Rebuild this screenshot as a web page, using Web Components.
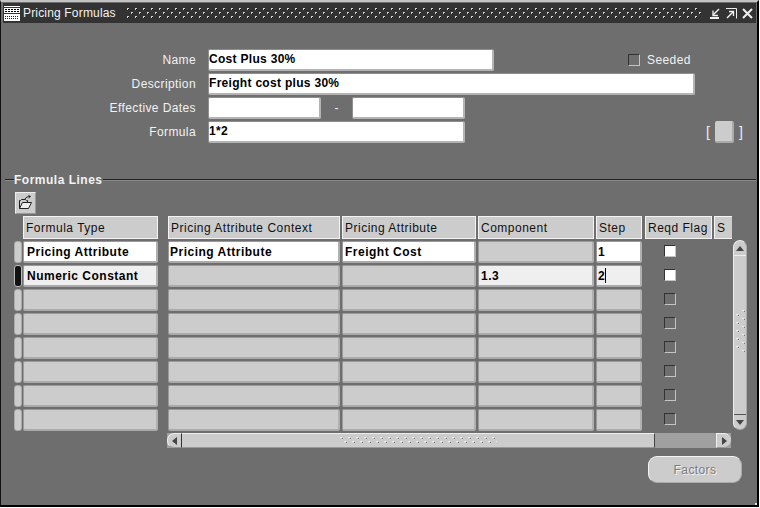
<!DOCTYPE html>
<html><head><meta charset="utf-8"><style>
html,body{margin:0;padding:0;background:#fff}
body{font:12px "Liberation Sans",Arial,sans-serif;width:760px;height:508px;overflow:hidden}
</style></head><body>
<x-window>
  <x-titlebar slot="title">Pricing Formulas</x-titlebar>
  <x-form>
    <x-row label="Name"><x-field w="286" value="Cost Plus 30%"></x-field><x-check label="Seeded"></x-check></x-row>
    <x-row label="Description"><x-field w="487" value="Freight cost plus 30%"></x-field></x-row>
    <x-row label="Effective Dates"><x-field w="113"></x-field><x-dash>-</x-dash><x-field w="113"></x-field></x-row>
    <x-row label="Formula"><x-field w="257" value="1*2"></x-field><x-descflex></x-descflex></x-row>
  </x-form>
  <x-section>Formula Lines</x-section>
  <x-toolbtn></x-toolbtn>
  <x-table></x-table>
  <x-footer><x-button>Factors</x-button></x-footer>
</x-window>
<script>
const def=(n,html)=>{customElements.define(n,class extends HTMLElement{
  constructor(){super();this.attachShadow({mode:'open'}).innerHTML=typeof html==='function'?html(this):html;}
})};

def('x-window',`<style>:host{display:flex;flex-direction:column;box-sizing:border-box;width:759px;height:507px;background:#6e6e6e;border-top:2px solid #c4c4c4;border-left:1px solid #111;border-right:2px solid #000;border-bottom:2px solid #000;color:#f2f2f2;position:relative}
:host::after{content:"";position:absolute;right:0;bottom:0;width:2px;height:2px;background:#ddd}</style><slot name="title"></slot><slot></slot>`);

def('x-titlebar',`<style>:host{display:flex;align-items:center;height:20px;background:#333;color:#f2f2f2;margin:1px 1px 0 2px;flex:none;letter-spacing:.17px}
.logo{width:16px;height:15px;margin:1px 3px 0 1px;flex:none;display:block}
.t{white-space:nowrap}.g{flex:1;margin:0 8px 0 9px;overflow:hidden;height:12px}
.g svg{display:block}
.b{display:flex;gap:5px;margin-right:3px}.b svg{display:block}</style>
<svg class="logo" viewBox="0 0 16 15"><rect width="16" height="15" fill="#fff"/><path d="M0 1.500h16" stroke="#333"/><path d="M1 3.500h14M1 5.500h14" stroke="#000" stroke-dasharray="2 1"/><path d="M0 7.500h16" stroke="#333"/><path d="M1 10.500h14M1 12.500h14" stroke="#222" stroke-dasharray="1 1"/></svg>
<span class="t"><slot></slot></span><span class="g"><svg width="600" height="12"><defs><pattern id="tg" width="8" height="8" patternUnits="userSpaceOnUse"><path d="M2 1h2v1h-2zM2 2h1v1h-1zM6 5h2v1h-2zM6 6h1v1h-1z" fill="#d4d4d4"/><path d="M3 2h1v1h-1zM7 6h1v1h-1z" fill="#000"/></pattern></defs><rect width="600" height="12" fill="url(#tg)"/></svg></span>
<span class="b">
<svg width="11" height="11" viewBox="0 0 11 11" fill="none" stroke="#f0f0f0"><path d="M0 10h9" stroke-width="2"/><path d="M9 1L3 7" stroke-width="1.500"/><path d="M3 2.500V7.500H8" stroke-width="1.300"/></svg>
<svg width="11" height="11" viewBox="0 0 11 11" fill="none" stroke="#f0f0f0"><path d="M0 .5h10.500V10.500" stroke-width="1"/><path d="M1 10L7 4" stroke-width="1.500"/><path d="M3 3.500H7.500V8" stroke-width="1.300"/></svg>
<svg width="11" height="11" viewBox="0 0 11 11" fill="none" stroke="#f0f0f0" stroke-width="2"><path d="M1 1l9 9M10 1l-9 9"/></svg>
</span>`);

def('x-form',`<style>:host{display:flex;flex-direction:column;gap:2px;padding-top:26px;flex:none}</style><slot></slot>`);
def('x-row',h=>`<style>:host{display:flex;align-items:center;height:22px}
.l{width:195px;text-align:right;margin-right:12px;letter-spacing:.4px;white-space:nowrap;flex:none}
.c{display:flex;align-items:center;flex:1}</style><span class="l">${h.getAttribute('label')}</span><span class="c"><slot></slot></span>`);

const cellCss=`box-sizing:border-box;height:22px;display:flex;align-items:center;padding:0 0 0 2px;font-weight:bold;color:#000;white-space:nowrap;overflow:hidden;letter-spacing:.5px;border-radius:2px;border:1px solid;border-width:1px 2px 2px 1px;`;
def('x-field',h=>`<style>:host{display:block;flex:none;width:${h.getAttribute('w')}px;${cellCss}padding:0 0 1px 0;letter-spacing:.3px;background:#fff;border-color:#8e8e8e #b4b4b4 #b4b4b4 #8e8e8e}</style>${h.getAttribute('value')||''}`);
def('x-dash',`<style>:host{display:block;width:31px;text-align:center;flex:none}</style><slot></slot>`);
def('x-check',h=>`<style>:host{display:flex;align-items:center;margin-left:134px;letter-spacing:.4px}
.b{box-sizing:border-box;width:12px;height:12px;border:1px solid;border-color:#333 #c4c4c4 #c4c4c4 #333;margin-right:7px}</style><span class="b"></span>${h.getAttribute('label')}`);
def('x-descflex',`<style>:host{display:flex;align-items:center;margin-left:241px;gap:5px;font-size:14px;color:#eee}
.b{box-sizing:border-box;width:19px;height:22px;background:#ccc;border:1px solid;border-width:0 2px 2px 0;border-color:#aaa;border-radius:2px}</style><span>[</span><span class="b"></span><span>]</span>`);

def('x-section',`<style>:host{display:flex;align-items:center;margin-top:27px;height:20px;font-weight:bold;letter-spacing:.5px;flex:none}
i{height:1px;background:#222;box-shadow:0 1px 0 #8a8a8a;display:block;margin-bottom:2px}
.a{width:9px;margin-left:4px}.z{flex:1;margin-right:1px}.t{white-space:nowrap}</style><i class="a"></i><span class="t"><slot></slot></span><i class="z"></i>`);

def('x-toolbtn',`<style>:host{display:block;box-sizing:border-box;width:21px;height:22px;margin:2px 0 0 14px;background:#ccc;border:1px solid;border-color:#eee #999 #999 #eee;flex:none}
svg{display:block;margin:2px}</style><svg width="15" height="15" viewBox="0 0 15 15" fill="#ccc" stroke="#222"><path d="M1.500 13.500V5.500h1l1-1h4l1 1h1v2"/><path d="M1.500 13.500h9l3-6h-9z" fill="#eee"/><path d="M7 4C8 2 10 1.500 12 1.500M10.500 .5L12.500 1.500 10.500 3" fill="none"/></svg>`);

const cols=[[135,0],[172,10],[134,2],[116,2],[46,2],[67,3],[30,2]];
const rows=[
 [['Pricing Attribute','w'],['Pricing Attribute','w'],['Freight Cost','w'],['','d'],['1','w'],'c'],
 [['Numeric Constant','a'],['','d'],['','d'],['1.3','a'],['2','a',1],'c']
];
for(let i=0;i<6;i++)rows.push([['','d'],['','d'],['','d'],['','d'],['','d'],'e']);

def('x-head',`<style>:host{display:block;box-sizing:border-box;height:23px;background:#ccc;color:#111;border:1px solid #f4f4f4;padding:3px 0 0 2px;white-space:nowrap;overflow:hidden;letter-spacing:.5px;line-height:17px}</style><slot></slot>`);
def('x-cell',h=>{const k=h.getAttribute('k');const bg={w:'#fff',a:'#efefef',d:'#ccc'}[k];
 return `<style>:host{display:block;${cellCss}background:${bg};border-color:#9a9a9a #b0b0b0 #aaa #9a9a9a}
 i{display:inline-block;width:1px;height:15px;background:#000}</style><slot></slot>${h.hasAttribute('caret')?'<i></i>':''}`});
def('x-ind',h=>`<style>:host{display:block;box-sizing:border-box;width:8px;height:22px;border-radius:3px;background:${h.hasAttribute('on')?'#111':'#ccc'};border:1px solid ${h.hasAttribute('on')?'#bbb':'#aaa'}}</style>`);
def('x-tick',h=>{const k=h.getAttribute('k');return `<style>:host{display:flex;align-items:center;box-sizing:border-box;height:22px;padding:0 0 2px 19px}
 b{box-sizing:border-box;display:block;width:12px;height:12px;background:${k=='c'?'#fff':'transparent'};border:1px solid;border-color:#333 #c4c4c4 #c4c4c4 #333}</style><b></b>`});

def('x-vscroll',`<style>:host{display:flex;flex-direction:column;box-sizing:border-box;width:14px;height:190px;background:#ccc;border-radius:7px;margin:24px 0 0 1px;flex:none;overflow:hidden;border:1px solid;border-color:#eee #aaa #aaa #eee}
.e{height:14px;display:flex;align-items:center;justify-content:center;flex:none;border-bottom:1px solid #eee}
.e.d{border-bottom:0;border-top:1px solid #555}
.m{flex:1;padding:53px 0 0 2px}
svg{display:block}</style>
<span class="e"><svg width="8" height="5"><path d="M4 0l4 5H0z" fill="#444"/></svg></span>
<span class="m"><svg width="9" height="44"><defs><pattern id="vg" width="9" height="8" patternUnits="userSpaceOnUse"><path d="M6 1h2v1h-2zM0 5h2v1h-2z" fill="#f0f0f0"/><path d="M8 2h1v1h-1zM2 6h1v1h-1z" fill="#777"/></pattern></defs><rect width="9" height="44" fill="url(#vg)"/></svg></span>
<span class="e d"><svg width="8" height="5"><path d="M0 0h8L4 5z" fill="#444"/></svg></span>`);

def('x-hscroll',`<style>:host{display:flex;box-sizing:border-box;width:564px;height:15px;margin:0 0 0 153px;background:#a0a0a0;flex:none}
.l,.r{width:15px;flex:none;background:#ccc;display:flex;align-items:center;justify-content:center;box-sizing:border-box;border-top:1px solid #eee;border-bottom:1px solid #999}
.l{border-radius:7px 0 0 7px;border-left:1px solid #eee;border-right:1px solid #333}.r{border-radius:0 7px 7px 0;border-left:1px solid #eee}
.t{width:473px;box-sizing:border-box;background:#ccc;border-top:1px solid #eee;border-bottom:1px solid #999;border-right:1px solid #444;display:flex;align-items:center;justify-content:center}
.s{flex:1}svg{display:block}</style>
<span class="l"><svg width="5" height="8"><path d="M5 0v8L0 4z" fill="#444"/></svg></span>
<span class="t"><svg width="158" height="9"><defs><pattern id="hg" width="8" height="8" patternUnits="userSpaceOnUse"><path d="M1 1h2v1h-2zM5 5h2v1h-2z" fill="#f0f0f0"/><path d="M3 2h1v1h-1zM7 6h1v1h-1z" fill="#777"/></pattern></defs><rect width="158" height="9" fill="url(#hg)"/></svg></span>
<span class="s"></span>
<span class="r"><svg width="5" height="8"><path d="M0 0v8l5-4z" fill="#444"/></svg></span>`);

def('x-table',h=>{
 let out='';
 const pad={0:3,1:1,4:1};
 const cell=(i)=>`style="margin-left:${cols[i][1]}px;${pad[i]!==undefined?'padding-left:'+pad[i]+'px;':''}"`;
 const hcell=(i)=>`style="margin-left:${cols[i][1]}px;${i==6?'border-right:0;':''}"`;
 const names=['Formula Type','Pricing Attribute Context','Pricing Attribute','Component','Step','Reqd Flag','S'];
 out+=`<span></span>`+cols.map((c,i)=>`<x-head ${hcell(i)}>${names[i]}</x-head>`).join('');
 rows.forEach((r,ri)=>{
  out+=`<x-ind ${ri==1?'on':''}></x-ind>`;
  for(let i=0;i<5;i++)out+=`<x-cell k="${r[i][1]}" ${r[i][2]?'caret':''} ${cell(i)}>${r[i][0]}</x-cell>`;
  out+=`<x-tick k="${r[5]}" style="margin-left:${cols[5][1]}px"></x-tick><span></span>`;
 });
 const tracks='9px '+cols.map(c=>(c[0]+c[1])+'px').join(' ');
 return `<style>:host{display:block;margin:2px 0 0 13px;flex:none}
 .w{display:flex;align-items:flex-start}
 .g{display:grid;grid-template-columns:${tracks};grid-template-rows:25px repeat(8,24px);width:718px;overflow:hidden;color:#111}
 </style><div class="w"><div class="g">${out}</div><x-vscroll></x-vscroll></div><x-hscroll></x-hscroll>`;
});
def('x-footer',`<style>:host{display:flex;justify-content:flex-end;padding:8px 15px 0 0;flex:none}</style><slot></slot>`);
def('x-button',`<style>:host{display:flex;align-items:center;justify-content:center;box-sizing:border-box;width:94px;height:27px;background:#ccc;border-radius:9px;color:#7c7c7c;text-shadow:1px 1px 0 #f4f4f4;border:1px solid;border-color:#f4f4f4 #aaa #aaa #f4f4f4;letter-spacing:.4px}</style><slot></slot>`);
</script>
</body></html>
